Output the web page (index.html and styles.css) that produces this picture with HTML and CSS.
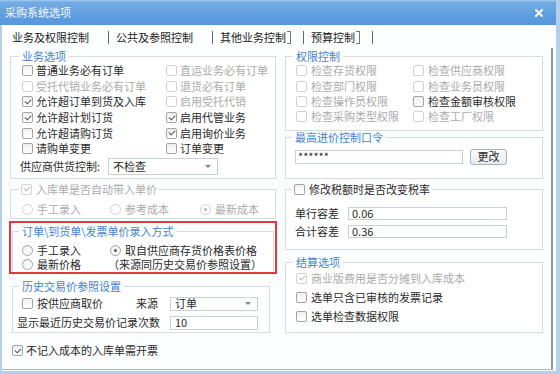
FILE: index.html
```html
<!DOCTYPE html>
<html lang="zh-CN">
<head>
<meta charset="utf-8">
<title>采购系统选项</title>
<link rel="stylesheet" href="styles.css">
</head>
<body>
<div class="window">
  <div class="titlebar">
    <span class="title">采购系统选项</span>
    <svg class="close" width="8" height="8" viewBox="0 0 8 8"><path d="M1 1L7 7M7 1L1 7"/></svg>
  </div>
  <div class="frame">
    <div class="tabs">
      <span class="tab first">业务及权限控制</span>
      <span class="tab">公共及参照控制</span>
      <span class="tab edge">其他业务控制</span>
      <span class="tab edge">预算控制</span>
    </div>
    <div class="panel">
      <div class="columns">
        <div class="col">
          <fieldset class="grp g-biz">
            <legend>业务选项</legend>
            <div class="grid-biz">
              <label class="opt"><span class="cb"></span>普通业务必有订单</label>
              <label class="opt dis"><span class="cb"></span>直运业务必有订单</label>
              <label class="opt dis"><span class="cb"></span>受托代销业务必有订单</label>
              <label class="opt dis"><span class="cb"></span>退货必有订单</label>
              <label class="opt"><span class="cb on"></span>允许超订单到货及入库</label>
              <label class="opt dis"><span class="cb"></span>启用受托代销</label>
              <label class="opt"><span class="cb on"></span>允许超计划订货</label>
              <label class="opt"><span class="cb on"></span>启用代管业务</label>
              <label class="opt"><span class="cb"></span>允许超请购订货</label>
              <label class="opt"><span class="cb on"></span>启用询价业务</label>
              <label class="opt"><span class="cb"></span>请购单变更</label>
              <label class="opt"><span class="cb"></span>订单变更</label>
            </div>
            <div class="sel-row">
              <span class="sel-label">供应商供货控制:</span>
              <span class="select w-supplier">不检查<i class="arrow"></i></span>
            </div>
          </fieldset>

          <fieldset class="grp g-auto">
            <legend class="lg-opt"><label class="opt dis"><span class="cb on"></span>入库单是否自动带入单价</label></legend>
            <div class="grid-auto">
              <label class="opt dis"><span class="rb"></span>手工录入</label>
              <label class="opt dis"><span class="rb"></span>参考成本</label>
              <label class="opt dis"><span class="rb on"></span>最新成本</label>
            </div>
          </fieldset>

          <div class="mark">
            <fieldset class="grp g-pay">
              <legend>订单\到货单\发票单价录入方式</legend>
              <div class="grid-pay">
                <label class="opt"><span class="rb"></span>手工录入</label>
                <label class="opt"><span class="rb on"></span>取自供应商存货价格表价格</label>
                <label class="opt"><span class="rb"></span>最新价格</label>
                <span class="note">（来源同历史交易价参照设置）</span>
              </div>
            </fieldset>
          </div>

          <fieldset class="grp g-hist">
            <legend>历史交易价参照设置</legend>
            <div class="grid-hist">
              <div class="hist-left">
                <label class="opt"><span class="cb"></span>按供应商取价</label>
                <span>来源</span>
              </div>
              <span class="select w-src">订单<i class="arrow"></i></span>
              <span class="hist-label">显示最近历史交易价记录次数</span>
              <span class="field">10</span>
            </div>
          </fieldset>
        </div>

        <div class="col">
          <fieldset class="grp g-perm">
            <legend>权限控制</legend>
            <div class="grid-perm">
              <label class="opt dis"><span class="cb"></span>检查存货权限</label>
              <label class="opt dis"><span class="cb"></span>检查供应商权限</label>
              <label class="opt dis"><span class="cb"></span>检查部门权限</label>
              <label class="opt dis"><span class="cb"></span>检查业务员权限</label>
              <label class="opt dis"><span class="cb"></span>检查操作员权限</label>
              <label class="opt"><span class="cb"></span>检查金额审核权限</label>
              <label class="opt dis"><span class="cb"></span>检查采购类型权限</label>
              <label class="opt dis"><span class="cb"></span>检查工厂权限</label>
            </div>
          </fieldset>

          <fieldset class="grp g-pwd">
            <legend>最高进价控制口令</legend>
            <div class="pwd-row">
              <span class="field w-pwd">******</span>
              <span class="btn">更改</span>
            </div>
          </fieldset>

          <fieldset class="grp g-tax">
            <legend class="lg-opt"><label class="opt"><span class="cb"></span>修改税额时是否改变税率</label></legend>
            <div class="grid-tax">
              <span>单行容差</span>
              <span class="field">0.06</span>
              <span>合计容差</span>
              <span class="field">0.36</span>
            </div>
          </fieldset>

          <fieldset class="grp g-settle">
            <legend>结算选项</legend>
            <div class="list-settle">
              <label class="opt dis"><span class="cb on"></span>商业版费用是否分摊到入库成本</label>
              <label class="opt"><span class="cb"></span>选单只含已审核的发票记录</label>
              <label class="opt"><span class="cb"></span>选单检查数据权限</label>
            </div>
          </fieldset>
        </div>
      </div>

      <label class="opt footer-opt"><span class="cb on"></span>不记入成本的入库单需开票</label>
    </div>
  </div>
</div>
</body>
</html>
```

FILE: styles.css
```css
* { box-sizing: border-box; }

html, body {
  margin: 0;
  padding: 0;
}

body {
  width: 560px;
  height: 374px;
  overflow: hidden;
  font-family: "Noto Sans CJK SC", "Noto Sans", sans-serif;
  font-size: 11px;
  line-height: 13px;
  color: #2a2a2a;
  background: #fff;
}

.window {
  width: 560px;
  height: 374px;
  display: flex;
  flex-direction: column;
  border-right: 4px solid #b3cfea;
  background: #fcfdfe;
}

.titlebar {
  flex: none;
  height: 25px;
  display: flex;
  align-items: center;
  justify-content: space-between;
  padding: 0 13px 0 5px;
  background: linear-gradient(#a4cdf2 0, #74ade5 2px, #5f9ddf 60%, #5797dc 100%);
  color: #f4f8fd;
}

.close path {
  stroke: #fff;
  stroke-width: 2;
  stroke-linecap: square;
}

.frame {
  flex: 1;
  display: flex;
  flex-direction: column;
  border-left: 2px solid #b3cfea;
  border-bottom: 3px solid #b3cfea;
  min-height: 0;
}

/* tabs */
.tabs {
  flex: none;
  height: 23px;
  display: flex;
  align-items: center;
  padding: 2px 0 0 1px;
  color: #1a1a1a;
}

.tab {
  display: flex;
  align-items: center;
  height: 13px;
  padding: 0 19px 0 7px;
  border-right: 1px solid #666;
}

.tab.first { padding-left: 9px; }

.tab.edge { padding-right: 12px; }

.tab.edge::after {
  content: "";
  width: 3px;
  height: 11px;
  margin-left: 1px;
  border: 1px solid #777;
  border-left: 0;
}

/* panel */
.panel {
  flex: 1;
  margin: 0 3px 1px 0;
  padding: 2px 8px 0 8px;
  border-right: 2px solid #8c98a4;
  border-bottom: 1px solid #aab4be;
}

.columns {
  display: grid;
  grid-template-columns: 266px 258px;
  column-gap: 9px;
  align-items: start;
}

.col {
  display: flex;
  flex-direction: column;
}

/* group boxes */
.grp {
  margin: 0;
  min-width: 0;
  border: 1px solid #d6dce2;
  padding: 0 10px 0 10px;
  background: #fff;
}

.grp > legend {
  height: 13px;
  line-height: 13px;
  padding: 0 3px;
  margin-left: -3px;
  color: #4282d6;
}

.grp > legend.lg-opt {
  color: inherit;
  padding: 0 2px;
  margin-left: -3px;
}

/* options */
.opt {
  display: flex;
  align-items: center;
  gap: 4px;
  white-space: nowrap;
}

.dis { color: #ababab; }

.cb {
  flex: none;
  width: 11px;
  height: 11px;
  display: inline-flex;
  align-items: center;
  justify-content: center;
  border: 1px solid #a3a3a3;
  border-radius: 2px;
  background: linear-gradient(#f0f0f0, #fff);
}

.cb.on::after {
  content: "";
  width: 5px;
  height: 3px;
  border-left: 1.5px solid #5a5a5a;
  border-bottom: 1.5px solid #5a5a5a;
  transform: translateY(-1px) rotate(-45deg);
}

.dis .cb { border-color: #d2d2d2; background: #fff; }
.dis .cb.on::after { border-color: #bcbcbc; }

.rb {
  flex: none;
  width: 11px;
  height: 11px;
  display: inline-flex;
  align-items: center;
  justify-content: center;
  border: 1px solid #a3a3a3;
  border-radius: 50%;
  background: linear-gradient(#f0f0f0, #fff);
}

.rb.on::after {
  content: "";
  width: 3px;
  height: 3px;
  border-radius: 50%;
  background: #5a5a5a;
}

.dis .rb { border-color: #d2d2d2; background: #fff; }
.dis .rb.on::after { background: #b4b4b4; }

/* fields */
.field,
.select {
  display: flex;
  align-items: center;
  background: #fff;
  border: 1px solid #c9d0d6;
  padding: 0 3px;
  color: #2a2a2a;
}

.select {
  justify-content: space-between;
  padding: 0 6px 0 4px;
}

.arrow {
  width: 0;
  height: 0;
  border-left: 3px solid transparent;
  border-right: 3px solid transparent;
  border-top: 3px solid #808080;
}

.btn {
  display: flex;
  align-items: center;
  justify-content: center;
  width: 37px;
  height: 16px;
  border: 1px solid #a9b1ba;
  border-radius: 3px;
  background: linear-gradient(#fbfbfb, #e7eaed);
  color: #2a2a2a;
}

/* 业务选项 */
.g-biz {
  padding: 0 10px 3px 11px;
}

.g-biz .opt { gap: 3px; }

.grid-biz {
  display: grid;
  grid-template-columns: 144px 1fr;
  grid-auto-rows: 15.6px;
  align-items: center;
}

.sel-row {
  display: flex;
  align-items: center;
  height: 17px;
  margin: 1.4px 0 0 -2px;
}

.sel-label { width: 88px; }

.w-supplier {
  width: 110px;
  height: 17px;
}

/* 入库单 */
.g-auto {
  margin-top: 4px;
  padding: 6px 10px 0 11px;
}

.grid-auto {
  display: grid;
  grid-template-columns: 88px 90px 1fr;
  height: 16px;
  align-items: center;
}

/* red annotation box */
.mark {
  margin: 2px -1px 0;
  border: 2px solid #e0393f;
  padding: 2px 0 0;
}

.g-pay {
  margin: 0 1px;
  border-bottom: 0;
  padding: 5px 8px 0 9px;
}

.grid-pay {
  display: grid;
  grid-template-columns: 88px 1fr;
  grid-auto-rows: 14.5px;
  align-items: center;
}

.note {
  margin-left: -2px;
  white-space: nowrap;
}

/* 历史交易价 */
.g-hist {
  margin: 6px 6px 0 2px;
  padding: 4px 11px 2px 4px;
}

.g-hist > legend { margin-left: 2px; }

.grid-hist {
  display: grid;
  grid-template-columns: 153px 88px;
  grid-auto-rows: 14px;
  row-gap: 5px;
  align-items: center;
}

.hist-left {
  display: flex;
  align-items: center;
  justify-content: space-between;
  padding: 0 12px 0 5px;
}

.w-src,
.grid-hist .field {
  height: 14px;
}

.grid-hist .field { padding-left: 4px; }

/* 权限控制 */
.g-perm {
  padding: 0 10px 5.4px 10px;
}

.grid-perm {
  display: grid;
  grid-template-columns: 117px 1fr;
  grid-auto-rows: 15.4px;
  align-items: center;
}

/* 口令 */
.g-pwd {
  padding: 5px 10px 13px 9px;
}

.pwd-row {
  display: flex;
  align-items: center;
  gap: 7px;
  height: 16px;
}

.w-pwd {
  width: 168px;
  height: 14px;
  padding-left: 2px;
}

/* 税率 */
.g-tax {
  margin-top: 4px;
  padding: 11px 10px 11px 9px;
}

.grid-tax {
  display: grid;
  grid-template-columns: 53px 159px;
  grid-auto-rows: 13px;
  row-gap: 5px;
  align-items: center;
}

.grid-tax .field { height: 13px; }

/* 结算 */
.g-settle {
  margin-top: 6px;
  padding: 0 10px 6px 10px;
}

.list-settle {
  display: grid;
  grid-auto-rows: 19px;
  align-items: center;
}

/* footer */
.footer-opt {
  margin: 10px 0 0 2px;
  height: 16px;
  gap: 3px;
}
```
